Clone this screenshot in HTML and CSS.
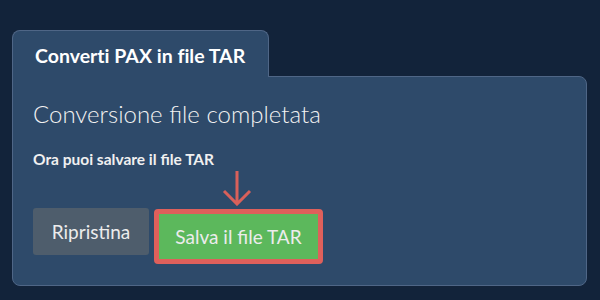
FILE: index.html
```html
<!DOCTYPE html>
<html lang="it">
<head>
    <meta charset="UTF-8">
    <title>Converti PAX in file TAR</title>
    <link rel="stylesheet" href="styles.css">
</head>
<body>
    <div class="wrap">
        <div class="tab">Converti PAX in file TAR</div>
        <div class="panel">
            <h2>Conversione file completata</h2>
            <p class="note">Ora puoi salvare il file TAR</p>
            <div class="buttons">
                <button class="btn btn-reset">Ripristina</button>
                <div class="highlight">
                    <svg class="arrow" width="30" height="36" viewBox="0 0 30 36">
                        <path d="M15 1 V34 M2 21 L15 34 L28 21" fill="none" stroke="#d9605a" stroke-width="3"/>
                    </svg>
                    <button class="btn btn-save">Salva il file TAR</button>
                </div>
            </div>
        </div>
    </div>
</body>
</html>
```
FILE: styles.css
```css
* {
    margin: 0;
    padding: 0;
    box-sizing: border-box;
}

body {
    background-color: #12233a;
    font-family: Lato, "Open Sans", sans-serif;
    color: #fff;
}

.wrap {
    padding: 30px 13px 0 12px;
}

.tab {
    width: 257px;
    height: 47px;
    padding: 13px 0 0 22px;
    background-color: #2e4a6a;
    border: 1px solid #4f6686;
    border-bottom: none;
    border-radius: 8px 8px 0 0;
    font-size: 19.5px;
    font-weight: 700;
    font-variant-ligatures: no-common-ligatures;
    position: relative;
    z-index: 1;
    margin-bottom: -1px;
}

.panel {
    height: 210px;
    background-color: #2e4a6a;
    border: 1px solid #4f6686;
    border-radius: 0 8px 8px 8px;
    padding: 22px 20px 0 20px;
}

.panel h2 {
    font-size: 24px;
    font-weight: 300;
    color: #f2f2f2;
}

.note {
    margin-top: 22px;
    font-size: 15.5px;
    font-weight: 700;
    color: #f0f0f0;
}

.buttons {
    display: flex;
    align-items: flex-start;
    gap: 5px;
    margin-top: 40px;
}

.btn {
    border: none;
    border-radius: 3px;
    font-family: Lato, "Open Sans", sans-serif;
    font-size: 19px;
    font-weight: 400;
    color: #ececec;
}

.btn-reset {
    width: 116px;
    height: 47px;
    background-color: #4e5d6c;
}

.highlight {
    position: relative;
    border: 5px solid #df605b;
    border-radius: 4px;
    margin-top: 1px;
}

.btn-save {
    display: block;
    width: 159px;
    height: 45px;
    border-radius: 0;
    background-color: #5cb85c;
}

.arrow {
    position: absolute;
    left: 63px;
    top: -44px;
}
```
